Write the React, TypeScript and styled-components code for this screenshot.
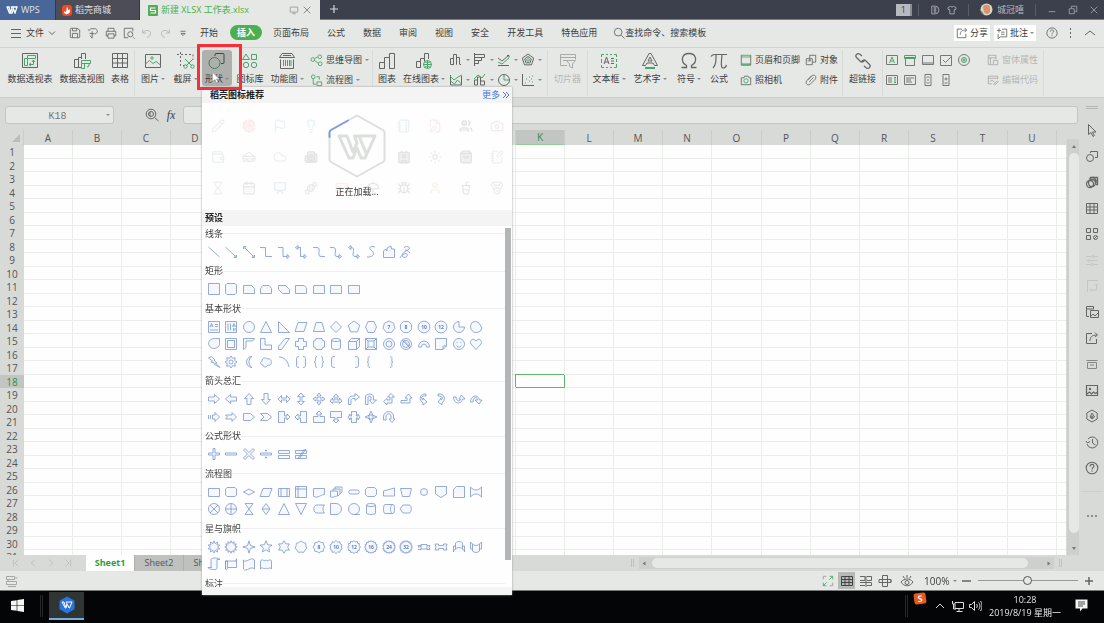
import React from "react";
import styled, { createGlobalStyle } from "styled-components";
import {
  Bug, Building2, CalendarDays, Camera, Candy, ChartPie, Cloud, Contact, CupSoda, FilePen, Flag, Hourglass,
  Lightbulb, Mail, Medal, Notebook, NotebookPen, Pencil, Presentation, Sandwich, ShoppingBag, Sun, Umbrella,
  User, Users, Wallet,
} from "lucide-react";

const font = '"Open Sans", "Noto Sans CJK SC", sans-serif';
const ink = "#646664";
const green = "#4aa56c";
const surface = "#e6e8e5";
const chrome = "#d8dad8";
const line = "#cbcdcb";

const Global = createGlobalStyle`
  * { box-sizing: border-box; }
  body { margin: 0; overflow: hidden; font: 9px/12px ${font}; color: #3c3e3c; }
  button, input, select { font: inherit; color: inherit; border: 0; padding: 0; margin: 0; background: none; }
  svg { display: block; flex: none; }
`;

/* ---------- drawing helpers ---------- */

const circle = (x: number, y: number, r: number) => `M${x - r} ${y}a${r} ${r} 0 1 0 ${2 * r} 0a${r} ${r} 0 1 0 ${-2 * r} 0z`;

const star = (points: number, outer: number, inner: number, cx = 7, cy = 7) => {
  const steps: string[] = [];
  for (let i = 0; i < points * 2; i++) {
    const r = i % 2 ? inner : outer;
    const a = (Math.PI * i) / points - Math.PI / 2;
    steps.push(`${(cx + r * Math.cos(a)).toFixed(2)} ${(cy + r * Math.sin(a)).toFixed(2)}`);
  }
  return `M${steps.join("L")}z`;
};

const polygon = (sides: number, r: number, turn = 0) => {
  const steps: string[] = [];
  for (let i = 0; i < sides; i++) {
    const a = (2 * Math.PI * i) / sides - Math.PI / 2 + turn;
    steps.push(`${(7 + r * Math.cos(a)).toFixed(2)} ${(7 + r * Math.sin(a)).toFixed(2)}`);
  }
  return `M${steps.join("L")}z`;
};

type IconProps = { box?: number; size?: number; k?: string; g?: string; fill?: string; color?: string; accent?: string; dash?: string; weight?: number };
const Icon = ({ box = 18, size = box, k, g, fill, color = ink, accent = green, dash, weight = 1 }: IconProps) => (
  <svg width={size} height={size} viewBox={`0 0 ${box} ${box}`} fill="none" strokeWidth={weight} aria-hidden="true">
    {k && <path d={k} stroke={color} strokeDasharray={dash} />}
    {g && <path d={g} stroke={accent} />}
    {fill && <path d={fill} fill={color} />}
  </svg>
);

/* ---------- title bar ---------- */

const Window = styled.div`
  display: flex;
  flex-direction: column;
  height: 100vh;
  background: ${surface};
`;

const TitleBar = styled.header`
  display: flex;
  height: 20px;
  flex: none;
  background: #3c3f4c;
  border-bottom: 1px solid #7577a6;
  color: #b5b7c0;
`;

const WindowTab = styled.button<{ $width: number; $tone: string }>`
  display: flex;
  align-items: center;
  gap: 3px;
  width: ${(p) => p.$width}px;
  height: 20px;
  padding-left: 6px;
  background: ${(p) => p.$tone};
  border-right: 1px solid #34374a;
  color: #e3e4e8;
  white-space: nowrap;
`;

const FileTab = styled(WindowTab)`
  padding: 0 8px;
  color: #4cb050;
  border: 0;
`;

const Push = styled.span`
  flex: 1;
`;

const TitleTools = styled.div`
  display: flex;
  align-items: center;
  margin-left: auto;
  padding-right: 5px;
  gap: 11px;
`;

const Counter = styled.span`
  width: 16px;
  height: 12px;
  margin-right: -5px;
  border-right: 2px solid #8c8e96;
  background: #b9bac0;
  color: #3c3f4c;
  text-align: center;
`;

const IconButton = styled.button<{ $width?: number }>`
  display: flex;
  align-items: center;
  justify-content: center;
  width: ${(p) => p.$width ?? 18}px;
  height: 18px;
  flex: none;
`;

const ToolButton = styled.button`
  display: flex;
  align-items: center;
`;

const Divider = styled.span<{ $tone?: string; $height?: number }>`
  width: 1px;
  height: ${(p) => p.$height ?? 12}px;
  flex: none;
  background: ${(p) => p.$tone ?? line};
`;

/* ---------- menu bar ---------- */

const MenuBar = styled.nav`
  display: flex;
  align-items: center;
  height: 28px;
  flex: none;
  padding: 0 2px 2px 10px;
  border-bottom: 1px solid #d3d5d3;
  white-space: nowrap;
`;

const FileMenu = styled.button`
  display: flex;
  align-items: center;
  gap: 4px;
  width: 50px;
`;

const QuickTools = styled.div`
  display: flex;
  margin: 0 8px 0 6px;
`;

const MenuTabs = styled.div`
  display: flex;
  align-items: center;
  gap: 18px;
`;

const MenuTab = styled.button<{ $active?: boolean }>`
  height: 15px;
  border-radius: 8px;
  ${(p) => p.$active && "padding: 0 7px; margin: 0 -7px 0 -6px; background: #4caf50; color: #fff; font-weight: 700;"}
`;

const Search = styled.button`
  display: flex;
  align-items: center;
  margin-left: 16px;
`;

const WhiteButton = styled.button`
  display: flex;
  align-items: center;
  gap: 2px;
  height: 16px;
  padding: 0 2px;
  margin-right: 4px;
  background: #fdfefd;
`;

/* ---------- ribbon ---------- */

const Ribbon = styled.section`
  display: flex;
  height: 50px;
  flex: none;
  padding: 2px 0 0 4px;
  border-bottom: 1px solid ${line};
  white-space: nowrap;
`;

const RibbonDivider = styled.span`
  width: 1px;
  margin: 0 2px 1px;
  flex: none;
  background: #d9dbd9;
`;

const BigButton = styled.button<{ $width: number; $active?: boolean; $muted?: boolean }>`
  display: flex;
  flex-direction: column;
  align-items: center;
  gap: 3px;
  width: ${(p) => p.$width}px;
  height: 36px;
  padding-top: 2px;
  flex: none;
  border-radius: 3px;
  background: ${(p) => (p.$active ? "#aeb0ae" : "none")};
  color: ${(p) => (p.$muted ? "#b5b7b5" : "inherit")};
`;

const Label = styled.span`
  display: flex;
  align-items: center;
  gap: 2px;
`;

const Caret = styled.i`
  border: 2px solid transparent;
  border-top-color: #8a8c8a;
  border-bottom: 0;
  flex: none;
`;

const Stack = styled.div<{ $width: number; $indent: number }>`
  display: flex;
  flex-direction: column;
  width: ${(p) => p.$width}px;
  padding-left: ${(p) => p.$indent}px;
  flex: none;
`;

const SmallButton = styled.button<{ $muted?: boolean }>`
  display: flex;
  align-items: center;
  gap: 3px;
  height: 20px;
  color: ${(p) => (p.$muted ? "#b5b7b5" : "inherit")};
`;

const IconGrid = styled.div<{ $columns: number; $cell: number }>`
  display: grid;
  grid-template-columns: repeat(${(p) => p.$columns}, ${(p) => p.$cell}px);
  grid-auto-rows: 20px;
  flex: none;
`;

const MenuAnchor = styled.div`
  position: relative;
  z-index: 5;
  align-self: flex-start;
`;

const Highlight = styled.span`
  position: absolute;
  z-index: 2;
  inset: -6px -10px -4px -5px;
  border: 3px solid #f5303a;
  pointer-events: none;
`;

const Pointer = styled.span`
  position: absolute;
  z-index: 3;
  left: 10px;
  top: 22px;
`;

/* ---------- shape menu ---------- */

const Menu = styled.div`
  position: absolute;
  left: 0;
  top: 37px;
  width: 310px;
  background: #fdfefd;
  box-shadow: 0 0 2px #9a9c9a;
`;

const MenuHeader = styled.div<{ $indent: number }>`
  display: flex;
  align-items: center;
  justify-content: space-between;
  height: 16px;
  padding: 0 2px 0 ${(p) => p.$indent}px;
  background: #f3f4f3;
  color: #222;
  font-weight: 700;
`;

const More = styled.a`
  display: flex;
  align-items: center;
  gap: 2px;
  color: #4a78e0;
  font-weight: 400;
  text-decoration: none;
`;

const Suggestions = styled.div`
  position: relative;
  display: grid;
  grid-template-columns: repeat(10, 31px);
  grid-auto-rows: 31px;
  height: 107px;
  padding-top: 7px;
  place-items: center;
`;

const Faded = styled.span<{ $tone: string }>`
  color: ${(p) => p.$tone};
  opacity: 0.11;
`;

const Loader = styled.div`
  position: absolute;
  inset: 11px 0 0;
  display: flex;
  flex-direction: column;
  align-items: center;
  gap: 8px;
`;

const ShapeScroll = styled.div`
  display: flex;
  height: 361px;
`;

const ShapeList = styled.div`
  flex: 1;
  overflow: auto;
  scrollbar-width: none;
`;

const ScrollThumb = styled.span`
  width: 6px;
  height: 332px;
  margin: 2px 1px 0 0;
  background: #b3b5b9;
`;

const GroupTitle = styled.h3`
  display: flex;
  align-items: center;
  height: 15px;
  margin: 0 0 2px;
  padding-left: 3px;
  font-size: 9px;
  font-weight: 400;
  &::after { content: ""; flex: 1; height: 1px; background: #f0f0f0; }
`;

const ShapeGrid = styled.div`
  display: grid;
  grid-template-columns: repeat(16, 1fr);
  width: 280px;
  margin: 0 0 3px 3px;
`;

const ShapeCell = styled.button`
  display: grid;
  place-items: center;
  aspect-ratio: 1;
`;

const MenuFooter = styled.div`
  height: 8px;
  background: #f6f5f5;
`;

type Shape = string | { d: string; t: string };

const rightArrow = "M1.5 5h6V2.5L12.5 7l-5 4.5V9h-6z";
const heads = { end: "M10 9.5l2.5 2-2.5 2z", start: "M4 .5L1.5 2.5l2.5 2z" };
const flatBox = "M1.5 3.5h11v8h-11z";
const square = "M1.5 1.5h11v11h-11z";

const groups: { name: string; shapes: Shape[] }[] = [
  {
    name: "线条",
    shapes: [
      "M1.5 2l11 10", "M1.5 2l10 9.5M12.5 12.5h-2.500l2.500-2.500z", "M3 3l8.500 8.500M12.5 12.5h-2.500l2.500-2.500zM1.500 1.500h2.500l-2.500 2.500z",
      "M1 2.5h5.500v9H13", "M1 2.500h5v9h4" + heads.end, "M4 2.500h2.500v9H10" + heads.end + heads.start,
      "M1 2.500h4c5 0-1 9 4 9h4", "M1 2.500h3c6 0-1 9 4 9h2" + heads.end, "M4 2.500c6 0-1 9 4 9h2" + heads.end + heads.start,
      "M11 2C6 0 4 3.500 7.500 5.500S10 12.500 3 12", "M1.500 12.500V6l2-2 1.500 2V3l4-2 .5 3h3v8.500z",
      "M5 3c2-3 7-1 5 1S4 7 3 10c0 3 4 3 5 1s-1-3-3-2-3 2-4 4M6 5c2 0 3 1 5 3",
    ],
  },
  {
    name: "矩形",
    shapes: [
      square, "M3 1.500h8l1.500 1.500v8L11 12.500H3L1.500 11V3z", "M1.500 3.500h8l3 3v5h-11z", "M4 3.500h6l2.500 3v5h-11v-5z", "M1.500 3.500h7l4 4v4h-7l-4-4z",
      "M1.500 3.500H9c2 0 3.500 1.500 3.500 3.500v4.500h-11z", "M2 3.500h10.500v8h-11V4z", "M1.500 3.500H12l.5.5v7.500h-11z", flatBox,
    ],
  },
  {
    name: "基本形状",
    shapes: [
      square + "M3 7l1.500-3.500L6 7M3.500 6h2M8 4.500h3M8 6.500h3M3 10h8", square + "M4 3.500v7M6.500 3.500v7M8.500 7L10 3.500 11.500 7M9 6h2M9.500 8v3M11 8v3",
      circle(7, 7, 5.5), "M7 1.500l5.500 11h-11z", "M1.500 1.500l11 11h-11z", "M4 2.500h9l-3 9H1z", "M4 2.500h6l2.500 9h-11z", "M7 1.500L12.500 7 7 12.500 1.500 7z",
      polygon(5, 6), "M4 1.500h6L12.500 7 10 12.500H4L1.500 7z", { d: polygon(7, 6), t: "7" }, { d: polygon(8, 6, 0.39), t: "8" }, { d: polygon(10, 6), t: "10" },
      { d: polygon(12, 6), t: "12" }, "M7 1.500a5.500 5.500 0 1 0 5.500 5.500H7z", "M3 2.500a5.500 5.500 0 0 1 7 .5l3 5a5.500 5.500 0 0 1-5 4.500A6 6 0 0 1 3 2.500z",
      "M12.500 1.500v6a5.500 5 0 1 1-5-6z", square + "M3.500 3.500h7v7h-7z", "M1.500 12.500v-11h11L10.500 4H4v6.500z", "M1.500 1.500H6V8h6.500v4.500h-11z", "M8 1.500h4.500l-8 11h-3v-3z",
      "M4.500 1.500h5v3h3v5h-3v3h-5v-3h-3v-5h3z", "M4 1.500h6l.5 2 2 .5v6l-2 .5-.5 2H4l-.5-2-2-.5V4l2-.5z",
      "M2.500 3v8c0 2 9 2 9 0V3c0-2-9-2-9 0zM2.500 3c0 2 9 2 9 0", "M1.500 4.500h8v8h-8zM1.500 4.500l3-3h8v8l-3 3M9.500 4.500l3-3", square + "M4 4h6v6H4zM1.500 1.500L4 4M12.500 1.500L10 4M1.500 12.500L4 10M12.500 12.500L10 10",
      circle(7, 7, 5.5) + circle(7, 7, 3), circle(7, 7, 5.5) + circle(7, 7, 3.5) + "M3 3l8 8M4.500 3l7 7", "M1.500 10a5.500 6 0 0 1 11 0H9.500a2.500 3 0 0 0-5 0z",
      "M1.500 1.500h11V9L9 12.500H1.500zM9 12.500V9h3.500", circle(7, 7, 5.5) + "M4.500 8.500c1 2 4 2 5 0M5 5v1M9 5v1", "M7 12.500L2 7C0 4 4 0 7 4c3-4 7 0 5 3z",
      "M1.500 3l3-1.500L8 5l-1 .5L10 8l-1 .5 4 4-5.500-3 1-1L4 7l1.500-1z", star(8, 6, 4) + circle(7, 7, 2), "M10 1.500a5.500 5.500 0 1 0 0 11c-4-2-4-9 0-11z",
      "M4 10c-3 0-3-3-1-4 0-3 4-4 5-2 3-1 5 2 4 3 1 2-1 4-3 3-2 3-5 2-5 0z", "M2 2c5 0 9 4 10 10", "M5 1.500c-2 0-2.500 1-2.500 2v7c0 1 .5 2 2.500 2M9 1.500c2 0 2.500 1 2.500 2v7c0 1-.5 2-2.500 2",
      "M5 1.500C2 1.500 5 7 2 7c3 0 0 5.500 3 5.500M9 1.500c3 0 0 5.500 3 5.500-3 0 0 5.500-3 5.500", "M6 1.500c-3 0-3.500 1-3.500 2v7c0 1 .5 2 3.500 2", "M8 1.500c3 0 3.500 1 3.500 2v7c0 1-.5 2-3.500 2",
      "M6 1.500C2 1.500 6 7 3 7c3 0-1 5.500 3 5.500", "M8 1.500c4 0 0 5.500 3 5.500-3 0 1 5.500-3 5.500",
    ],
  },
  {
    name: "箭头总汇",
    shapes: [
      rightArrow, "M12.500 5h-6V2.500L1.500 7l5 4.500V9h6z", "M5 12.500v-6H2.500L7 1.500l4.500 5H9v6z", "M5 1.500v6H2.500L7 12.500l4.500-5H9v-6z",
      "M1 7l3.500-3.500V6h5V3.500L13 7l-3.500 3.500V8h-5v2.500z", "M7 1l3.500 3.500H8v5h2.500L7 13 3.500 9.500H6v-5H3.500z",
      "M7 1l2 2.500H8V6h2.500V5L13 7l-2.500 2V8H8v2.500h1L7 13l-2-2.500h1V8H3.500v1L1 7l2.500-2v1H6V3.500H5z", "M7 2l2.500 3H8v3h2.500V6L13 9l-2.500 2.500V10h-7v1.500L1 9l2.500-3v2H6V5H4.500z",
      "M1.500 12.500V8c0-3 2-4 4-4H8V1.500L12.500 5 8 8.500V6.500H6c-1 0-2 1-2 2v4z", "M1.500 12.500V5c0-4 8-4 8 0v3h3L8.500 12l-3-4H7V5c0-1-3-1-3 0v7.500z",
      "M9 1.500L12.500 5H10v6H5v2L1.500 9.500 5 6.500V8h3V5H5.500z", "M9.500 2L13 6h-2v5H2V8.500h6V6H6z", "M9 2C3 1 1 8 6 11v2l4-3-4-4v2C3 6 5 3 9 4z", "M4 2c7-1 8 6 4 9v2L4 10l3-4v2c3-2 1-4-3-4z",
      "M1.500 5c0 7 8 8 9 2H13L9.500 3 7 7h1.500C8 10 4 9 4 5z", "M1.500 10c0-7 8-8 9-2H13l-3 4-4-4h2.500C8 4 4 5 4 10z",
      "M1.500 5v4M3.500 5v4M5.500 5H8V2.500L12.500 7 8 11.500V9H5.500z", "M1.500 5H8V2.500L12.500 7 8 11.500V9H1.500l2-2z", "M1.500 3.500h7L12.500 7l-4 3.500h-7z", "M1.500 3.500h7L12.500 7l-4 3.500h-7L5 7z",
      "M1.500 1.500h6V6H10V4l3 3-3 3V8H7.500v4.500h-6z", "M12.500 1.500h-6V6H4V4L1 7l3 3V8h2.500v4.500h6z", "M1.500 12.500v-6H6V4H4l3-3 3 3H8v2.500h4.500v6z", "M1.500 1.500v6H6V10H4l3 3 3-3H8V7.500h4.500v-6z",
      "M4.500 1.500h5V6H11V4l2 3-2 3V8H9.500v4.500h-5V8H3v2L1 7l2-3v2h1.500z", star(4, 6, 2.5) + "M5 5h4v4H5z", "M1.500 10V7c0-7 10-7 10-1v3H13l-3 3.500L7 9h2V6c0-3-5-3-5 1v3z",
    ],
  },
  {
    name: "公式形状",
    shapes: [
      "M6 1.500h2V6h4.500v2H8v4.500H6V8H1.500V6H6z", "M1.500 6h11v2h-11z", "M3 1.500l4 4 4-4L12.500 3l-4 4 4 4-1.500 1.500-4-4-4 4L1.500 11l4-4-4-4z",
      "M1.500 6h11v2h-11zM6.500 3h1v1h-1zM6.500 10h1v1h-1z", "M1.500 3.500h11v3h-11zM1.500 8.500h11v3h-11z", "M1.500 3.500h11v3h-11zM1.500 8.500h11v3h-11zM10.500 2l-7 10M12 2l-7 10",
    ],
  },
  {
    name: "流程图",
    shapes: [
      flatBox, "M3 2.500h8l1.500 1.500v6L11 11.500H3L1.500 10V4z", "M7 4l5.500 3L7 10 1.500 7z", "M4 3.500h9l-3 8H1z", flatBox + "M4 3.500v8M10 3.500v8", square + "M4 1.500v11M1.500 4h11",
      "M1.500 3.500h11v6c-4 0-6 4-11 2z", "M1.500 6h7v5c-3 0-4 2-7 1zM4 6V4h7v5M6 4V2h7v5l-4 4", "M4 5h6c3 0 3 4 0 4H4C1 9 1 5 4 5z", "M3.500 2.500h7l2 2v5l-2 2h-7l-2-2v-5z",
      "M1.500 6l11-3v8h-11z", "M1.500 3.500h11l-2 8h-7z", circle(7, 7, 3.5), "M1.500 1.500h11V9L7 12.500 1.500 9z", "M4.500 1.500h8v11h-11v-8z", "M1.500 2c3.500 4 7.500 4 11 0v10c-3.500-4-7.500-4-11 0z",
      circle(7, 7, 5.5) + "M3 3l8 8M11 3l-8 8", circle(7, 7, 5.5) + "M1.500 7h11M7 1.500v11", "M3 1.500h8l-8 11h8z", "M7 1.500l4 5.500-4 5.500L3 7zM3 7h8", "M7 1.500l5.500 11h-11z", "M1.500 1.500h11L7 12.500z",
      "M4 3h8.500c-2 2-2 6 0 8H4c-3-2-3-6 0-8z", "M1.500 1.500H7a5.500 5.500 0 0 1 0 11H1.500z", circle(7, 7, 5.5) + "M8 12.500h5", "M2.500 3v8c0 2 9 2 9 0V3c0-2-9-2-9 0zM2.500 3c0 2 9 2 9 0",
      "M3 2.500h8c2 0 2 9 0 9H3c-2 0-2-9 0-9zM10 2.500c-2 2-2 7 0 9", "M4 3h6c3 0 3 8 0 8H4L1 7z",
    ],
  },
  {
    name: "星与旗帜",
    shapes: [
      star(10, 6.2, 3.6), star(12, 6.2, 4), star(4, 6.2, 2), star(5, 6.2, 2.8), star(6, 6.2, 3.6), star(7, 6, 5), { d: star(8, 6, 5), t: "8" }, { d: star(10, 6.5, 5.2), t: "10" },
      { d: star(12, 6.5, 5.2), t: "12" }, { d: star(16, 6.5, 5.2), t: "16" }, { d: star(18, 6.5, 5.2), t: "24" }, { d: star(20, 6.5, 5.2), t: "32" },
      "M1 9.500h3V4.500h6v5h3l-1-2 1-2h-3M4 5.500H1l1 2zM4 9h6", "M1 4h3.500v1.500h5V4H13l-1 3 1 3H9.500V8.500h-5V10H1l1-3z", "M1.500 12c0-3 2-2 2-3V3c2-2 5-2 7 0v6c0 1 2 0 2 3M3.500 9c2-2 5-2 7 0M1.500 12V6h2M12.500 12V6h-2",
      "M1.500 2v7h2v2c2 2 5 2 7 0V9h2V2l-2 2v5M3.500 9V4l-2-2M3.500 4c2 2 5 2 7 0", "M4 10V2.500c0-2 8-2 9 0h-3v9c-1 2-9 1-9-1h4", "M1.500 12.500V4H12V2.500M3.500 10.500h9v-9M1.500 4h2v7c0 2-2 2-2 0z",
      "M1.500 3c3 4 7-4 11 0v9c-4-4-8 4-11 0z", "M1.500 4c2-3 3 1 5.500-1 2 2 4-2 5.500 1v8c-2-3-3 1-5.500-1-2 2-4-2-5.500 1z",
    ],
  },
  { name: "标注", shapes: [] },
];

const ShapeIcon = ({ shape }: { shape: Shape }) => {
  const { d, t } = typeof shape === "string" ? { d: shape, t: "" } : shape;
  return (
    <svg width="14" height="14" viewBox="0 0 14 14" aria-hidden="true">
      <path d={d} fill="#eaf1fc" fillOpacity="0.4" stroke="#7a98d0" strokeWidth="0.8" />
      {t && <text x="7" y="9" fontSize="5" fontWeight="700" fill="#5b7fc4" textAnchor="middle">{t}</text>}
    </svg>
  );
};

const suggestions: ([React.ElementType, string] | null)[] = [
  [Pencil, "#777"], [ChartPie, "#e33"], [Flag, "#39c"], [Lightbulb, "#48b"], null, null, [Notebook, "#58a"], [FilePen, "#c66"], [Users, "#000"], [Camera, "#955"],
  [Wallet, "#488"], [Sandwich, "#555"], [Cloud, "#777"], [Building2, "#000"], null, null, [Contact, "#000"], [Sun, "#555"], [ShoppingBag, "#000"], [NotebookPen, "#b66"],
  [Hourglass, "#777"], [CalendarDays, "#222"], [Presentation, "#36c"], [Candy, "#444"], [Mail, "#e66"], [Umbrella, "#222"], [Bug, "#222"], [User, "#c82"], [CupSoda, "#333"], [Medal, "#666"],
];

const ShapeMenu = () => (
  <Menu>
    <MenuHeader $indent={8}>
      稻壳图标推荐
      <More href="#more">
        更多 <Icon box={8} k="M1 1l3 3-3 3M4 1l3 3-3 3" color="#4a78e0" />
      </More>
    </MenuHeader>
    <Suggestions>
      {suggestions.map((s, i) => {
        if (!s) return <span key={i} />;
        const [Picture, tone] = s;
        return <Faded key={i} $tone={tone}><Picture size={14} fill={tone === "#000" || tone === "#e33" ? "currentColor" : "none"} fillOpacity={0.5} /></Faded>;
      })}
      <Loader>
        <svg width="58" height="64" viewBox="0 0 58 64" fill="none" strokeWidth="2" strokeLinejoin="round" strokeLinecap="round">
          <path d="M29 1.500 55 16q1.500 1 1.500 2.500v27q0 1.500-1.500 2.500L29 62.500 3 48q-1.500-1-1.500-2.500v-27Q1.500 17 3 16z" stroke="#dddfdd" fill="#fdfefd" />
          <path d="M1.500 23v-4.500Q1.500 17 3 16L20 6.500" stroke="#7f9fe0" />
          <path d="M11 22h8l6 16 4-9-2.500-7H47L37 44h-4l-4-10-4 10h-4zM31 22l7 17" stroke="#dddfdd" strokeWidth="3" />
        </svg>
        正在加载...
      </Loader>
    </Suggestions>
    <MenuHeader $indent={3}>预设</MenuHeader>
    <ShapeScroll>
      <ShapeList>
        {groups.map((group) => (
          <section key={group.name}>
            <GroupTitle>{group.name}</GroupTitle>
            <ShapeGrid>
              {group.shapes.map((shape, i) => (
                <ShapeCell key={i} aria-label={`${group.name} ${i + 1}`}><ShapeIcon shape={shape} /></ShapeCell>
              ))}
            </ShapeGrid>
          </section>
        ))}
      </ShapeList>
      <ScrollThumb />
    </ShapeScroll>
    <MenuFooter />
  </Menu>
);

/* ---------- ribbon content ---------- */

const barsIcon = "M1.500 16.500v-6h5v6zM6.500 16.500v-11h5v11M11.500 16.500v-15h5v15h-5";

type BigSpec = { label: string; width: number; icon: IconProps; caret?: boolean; muted?: boolean };
const Big = ({ label, width, icon, caret, muted }: BigSpec) => (
  <BigButton $width={width} $muted={muted}>
    <Icon {...icon} />
    <Label>{label}{caret && <Caret />}</Label>
  </BigButton>
);

const insertTools: BigSpec[] = [
  { label: "图片", width: 32, caret: true, icon: { k: "M1.500 2.500h15v13h-15z", g: "M1.500 12l4-3.500 3.500 3 3-2 4.500 3.500" + circle(8, 6, 1.2) } },
  { label: "截屏", width: 33, caret: true, icon: { k: "M3.500 0v13.500h4M0 2.500h16v5", dash: "2 2", g: "M8 7l7 7M16 7l-7 7" + circle(8.5, 14.5, 1.7) + circle(15.5, 14.5, 1.7) } },
];

const textTools: BigSpec[] = [
  { label: "文本框", width: 38, caret: true, icon: { g: "M1.500 5V2.500H4M6 2.500h2M10 2.500h2M14 2.500h2.500V5M16.500 7v3M16.500 12v3.500H14M12 15.500h-2M8 15.500H6M4 15.500H1.500V13M1.500 11V7", k: "M4 12l2.500-7L9 12M5 10h3M11 6.500h3M11 9h3M11 11.500h3" } },
  { label: "艺术字", width: 44, caret: true, icon: { k: "M1.500 13.500L8 1.500h2l6.500 12h-3L12 11H6l-1.500 2.500zM7 9l2-4 2 4z", g: "M4 15.500h10M4 16.500h10" } },
  { label: "符号", width: 34, caret: true, icon: { k: "M1.500 15.500h5v-2C0 10 1.500 1.500 9 1.500s9 8.500 2.500 12v2h5", weight: 1.3 } },
  { label: "公式", width: 26, icon: { k: "M1 4.500c1-2 2-2 4-2h12M6 3c0 6 0 10-3 13M12 3c-1 9-1 13 1 13s3-1 3.500-3", weight: 1.2 } },
];

const miniCharts: IconProps[] = [
  { k: "M1.500 11.500v-6h3v6zM4.500 11.500v-10h3v10M7.500 11.500v-7h3v7M11 11.500h1" }, { k: "M1.500 0v13M1.500 1.500h10v3h-10M1.500 4.500h7v3h-7M1.500 7.500h4v3h-4" },
  { k: "M1 5l4 3 6-5M10 2.500h2v2M1 12.500h11", g: "M1 9l4 2 7-6" }, { k: polygon(5, 6) + polygon(5, 3.5), g: polygon(5, 1.5) },
  { k: "M1.500 2v10h11V3", g: "M1 3l4 4 4-3 4-2M1.500 8l4 3 3-4 4 4" }, { k: "M1.500 12V7h3v5zM4.500 12V4h3v8M7.500 12V8h4v4z", g: "M1 6l4-4 4 3 3-4" },
  { k: circle(7, 7, 5.5), g: "M7 1.500V7h5.500" }, { k: "M1.500 1v11.500H13", g: "M4 10h1M5 6h1M8 8h1M8 4h1M11 9h1M11 3h1M10 6h1" },
];

const formControls: IconProps[] = [
  { k: "M1.500 2.500h11v9h-11z", g: "M4.500 10L7 4l2.500 6M5.500 8h3" }, { k: "M2.500 4.500h9v8h-9z", g: "M1.500 2.500h11v3h-11z" }, { k: "M1.500 2.500h11v9h-11zM1.500 10h11" },
  { k: "M1.500 2.500h11v10h-11zM4 7l2.500 2.500L12 4" }, { k: circle(7, 7, 5.5), g: circle(7, 7, 2.5) + circle(7, 7, 1) },
  { k: "M1.500 2.500h11v9h-11zM3 5h4M3 7h4M3 9h4", g: "M10 4v6M9 5l1-1 1 1M9 9l1 1 1-1" }, { k: "M1.500 2.500h11v9h-11zM3 5h8M3 7h5M3 9h6" },
  { k: "M4 1.500h6v11H4zM5.500 5L7 3.500 8.500 5M5.500 9L7 10.500 8.500 9M6 7h2" }, { k: "M4 1.500h6v11H4zM5.500 6h3M7 4.500v3M5.500 10h3" },
];

const RibbonContent = () => (
  <Ribbon>
    <Big label="数据透视表" width={52} icon={{ k: "M1.500 1.500h15v14h-15z", g: "M6.500 3.500h8v3h-8zM3.500 6.500h3v7h-3zM12.500 8.500v4h-4M11 10l1.500-2 1.500 2M10 11l-2 1.500 2 1.500" }} />
    <Big label="数据透视图" width={52} icon={{ k: "M1.500 15.500v-8h4v8zM5.500 15.500v-10h3M8.500 7V1.500h4V7M1.500 15.500H8", g: "M8.500 8.500h9v3h-9zM8.500 11.500h3v5h-3zM14 15l2-1v-2" }} />
    <Big label="表格" width={24} icon={{ k: "M1.500 1.500h15v14h-15zM1.500 6.500h15M1.500 11h15M6.500 1.500v14M11.500 1.500v14" }} />
    <RibbonDivider />
    {insertTools.map((t) => <Big key={t.label} {...t} />)}
    <MenuAnchor>
      <BigButton $width={30} $active>
        <Icon k="M7 4V2.500q0-1 1-1h7q1 0 1 1v8q0 1-1 1h-2" g={circle(6.5, 11, 5.5)} accent="#358a50" color="#444" />
        <Label>形状<Caret /></Label>
      </BigButton>
      <ShapeMenu />
      <Highlight />
      <Pointer>
        <svg width="8" height="12" viewBox="0 0 8 12"><path d="M.5.500v9L3 7.500l1.500 3.500 1.500-.7L4.500 7h3z" fill="#fff" stroke="#999" strokeWidth=".5" /></svg>
      </Pointer>
    </MenuAnchor>
    <Big label="图标库" width={36} icon={{ g: "M5 2l3.500 5.500h-7zM10.500 2.500h5v5h-5z" + circle(5, 13, 2.7) + circle(13, 13, 2.7) }} />
    <Big label="功能图" width={38} caret icon={{ k: "M1.500 5.500L4 1.500h10l2.500 4zM2.500 7.500v9h13v-9M5 3.500h8", g: "M5.500 8v6M7.500 8v6M9.500 8v6M11.500 8v6M13 8v6" }} />
    <Stack $width={64} $indent={4}>
      <SmallButton><Icon box={14} size={13} g={circle(3, 6, 2) + "M5 5l3-2M5 7l4 3" + circle(10.5, 3, 2) + circle(11, 10.5, 2)} />思维导图<Caret /></SmallButton>
      <SmallButton><Icon box={14} size={13} g={circle(3.5, 3, 2) + "M7 3h3v3M3.500 5v6h3M7.500 8.500h5v4h-5z"} />流程图<Caret /></SmallButton>
    </Stack>
    <RibbonDivider />
    <Big label="图表" width={24} icon={{ k: barsIcon }} />
    <Big label="在线图表" width={50} caret icon={{ k: "M1.500 15.500v-6h4v6zM5.500 15.500v-9h4v3M9.500 7V1.500h4V7", g: circle(12.5, 12.5, 4) + "M8.500 12.500h8M12.500 8.500v8M10 10c2 1 3 1 5 0M10 15c2-1 3-1 5 0" }} />
    <IconGrid $columns={4} $cell={24}>
      {miniCharts.map((icon, i) => <SmallButton key={i} aria-label={`图表类型 ${i + 1}`}><Icon box={14} {...icon} /><Caret /></SmallButton>)}
    </IconGrid>
    <RibbonDivider />
    <Big label="切片器" width={35} muted icon={{ k: "M8 13.500H1.500v-11h15v5M1.500 5.500h15M4 8.500h4M7.500 8.500h9l-3 3.500v4l-3-1.500V12z", color: "#a9aba9" }} />
    <RibbonDivider />
    {textTools.map((t) => <Big key={t.label} {...t} />)}
    <Stack $width={73} $indent={8}>
      <SmallButton><Icon box={14} size={12} k="M1.500 1v12h11V1" g="M2 1.500h10v2H2zM2 11.500h10v1H2z" />页眉和页脚</SmallButton>
      <SmallButton><Icon box={14} size={12} k="M1.500 4.500h3l1-2h4l1 2h2v8h-11z" g={circle(7, 8, 2.5)} />照相机</SmallButton>
    </Stack>
    <Stack $width={35} $indent={0}>
      <SmallButton><Icon box={14} size={12} k="M5.500 8V1.500h7v8H9M1.500 5.500h7v7h-7zM3 8h4" />对象</SmallButton>
      <SmallButton><Icon box={14} size={12} k="M3 7l5-5c3-2 6 1 4 4l-6 6c-3 2-6-1-4-4l6-6M5 9l5-5" />附件</SmallButton>
    </Stack>
    <RibbonDivider />
    <Big label="超链接" width={35} icon={{ k: "M8 4L5.500 2c-2-1.500-5 1.500-3 3.500l4 4c1.500 1.500 4 0 4-2M10 14l2.500 2c2 1.500 5-1.500 3-3.500l-4-4c-1.500-1.500-4 0-4 2", weight: 1.2 }} />
    <RibbonDivider />
    <IconGrid $columns={5} $cell={18}>
      {formControls.map((icon, i) => <SmallButton key={i} aria-label={`表单控件 ${i + 1}`}><Icon box={14} {...icon} color="#777977" /></SmallButton>)}
    </IconGrid>
    <Stack $width={66} $indent={12}>
      <SmallButton $muted><Icon box={14} size={12} k="M7 12.500H1.500v-11h9V6M1.500 4.500h9M4 4.500v8M7.500 7.500h5v5h-5z" color="#aaa" />窗体属性</SmallButton>
      <SmallButton $muted><Icon box={14} size={12} k="M6 11.500H1.500v-9h11V6M1.500 5h11M3 9l3-2 3 3M8 12l4-4 1 1-4 4z" color="#aaa" />编辑代码</SmallButton>
    </Stack>
    <RibbonDivider />
  </Ribbon>
);

/* ---------- worksheet ---------- */

const Workspace = styled.main`
  display: flex;
  flex: 1;
  min-height: 0;
  background: ${chrome};
`;

const SheetColumn = styled.div`
  display: flex;
  flex-direction: column;
  flex: 1;
  min-width: 0;
`;

const FormulaBar = styled.div`
  display: flex;
  align-items: center;
  height: 32px;
  flex: none;
  padding: 2px 2px 0 5px;
`;

const Field = styled.label`
  display: flex;
  align-items: center;
  height: 18px;
  padding: 0 3px;
  border: 1px solid #c3c5c3;
  border-radius: 3px;
  background: ${surface};
`;

const NameBox = styled(Field)`
  width: 109px;
  margin-right: 30px;
  input { width: 100%; min-width: 0; padding-top: 4px; text-align: center; font: 10px/12px "Liberation Mono", monospace; color: #777; }
`;

const FormulaInput = styled(Field)`
  flex: 1;
  input { width: 100%; }
`;

const Fx = styled.button`
  width: 22px;
  margin-right: 1px;
  font: italic 12px/14px "Liberation Serif", serif;
`;

const SheetArea = styled.div`
  display: flex;
  flex: 1;
  min-height: 0;
`;

const Viewport = styled.div`
  flex: 1;
  min-width: 0;
  overflow: auto;
  scrollbar-width: none;
  background: #fdfefd;
`;

const Grid = styled.table`
  width: 1px;
  table-layout: fixed;
  border-collapse: separate;
  border-spacing: 0;
  font-size: 10px;
  line-height: 12px;
  col { width: 49px; }
  col:first-child { width: 24px; }
  col:nth-child(5n + 6) { width: 50px; }
  thead tr { height: 15px; }
  tbody tr { height: 13px; }
  tbody tr:nth-child(odd) { height: 14px; }
`;

const Head = styled.th<{ $selected?: boolean }>`
  padding: 0;
  overflow: hidden;
  background: ${(p) => (p.$selected ? "#c3c5c3" : chrome)};
  color: ${(p) => (p.$selected ? "#2f8f46" : "#555")};
  font-weight: 400;
  thead & { border-right: 1px solid ${line}; }
  thead &:not(:first-child) { border-bottom: ${(p) => (p.$selected ? "1px solid #8fce94" : "0")}; }
`;

const Corner = styled.span`
  display: block;
  width: 0;
  margin-left: 12px;
  border: 4px solid #bbbdbb;
  border-top-color: transparent;
  border-left-color: transparent;
`;

const Cell = styled.td<{ $selected?: boolean }>`
  padding: 0;
  border-right: 1px solid #ebedeb;
  border-bottom: 1px solid #ebedeb;
  ${(p) => p.$selected && "border-color: #5cb865; box-shadow: -1px -1px 0 #5cb865;"}
`;

const VerticalBar = styled.div`
  display: flex;
  flex-direction: column;
  align-items: center;
  width: 12px;
  margin: 9px 1px 0;
  flex: none;
  border-left: 1px solid ${line};
  background: #ced0ce;
`;

const Thumb = styled.span`
  flex: 1;
  width: 10px;
  margin-bottom: 8px;
  border-radius: 5px;
  background: ${surface};
`;

const Arrow = styled.button<{ $turn: number }>`
  display: grid;
  place-items: center;
  width: 10px;
  height: 14px;
  flex: none;
  &::before { content: ""; border: 2px solid transparent; border-bottom: 3px solid #777; border-top: 0; transform: rotate(${(p) => p.$turn}deg); }
`;

const SheetTabs = styled.div`
  display: flex;
  align-items: center;
  height: 16px;
  flex: none;
`;

const TabNav = styled.div`
  display: flex;
  width: 86px;
  padding-left: 6px;
`;

const SheetTab = styled.button<{ $active?: boolean }>`
  width: 49px;
  height: 16px;
  border-right: 1px solid #aeb0ae;
  background: ${(p) => (p.$active ? "#fdfefd" : "#bfc1bf")};
  color: ${(p) => (p.$active ? "#2ea03c" : "#555")};
  font-weight: ${(p) => (p.$active ? 700 : 400)};
`;

const HorizontalBar = styled.div`
  display: flex;
  align-items: center;
  gap: 5px;
  width: 42%;
  margin-left: auto;
  padding: 0 18px 0 5px;
`;

const Track = styled.div`
  display: flex;
  align-items: center;
  flex: 1;
  height: 12px;
  background: #ced0ce;
`;

const HorizontalThumb = styled.span`
  flex: 1;
  height: 10px;
  margin: 0 16px 0 3px;
  border-radius: 5px;
  background: ${surface};
`;

const SplitGrip = styled.span`
  width: 3px;
  height: 8px;
  flex: none;
  border: 1px solid #c0c2c0;
  border-width: 0 1px;
`;

const SideBar = styled.aside`
  display: flex;
  flex-direction: column;
  align-items: center;
  width: 24px;
  flex: none;
`;

const Grip = styled.span`
  width: 12px;
  height: 3px;
  margin: 8px 0;
  border: 1px solid #b5b7b5;
  border-width: 1px 0;
`;

const SideButton = styled.button`
  display: grid;
  place-items: center;
  width: 24px;
  height: 26px;
`;

const SideRule = styled.span`
  width: 22px;
  height: 1px;
  margin: 10px 0 11px;
  background: #cdcfcd;
`;

const sideIcons: IconProps[] = [
  { k: "M3.500 1.500v10l2.500-2 2 4 1.500-1-2-3.500h3.500z" },
  { k: "M5.500 4V2.500h7v6H10" + circle(5, 9, 3.5) },
  { k: "M5.500 3.500V2.500h7v7H11M4 4l4-2 3 3v3" + circle(5, 9, 3.5) + circle(7, 8, 3.5), weight: 1.3 },
  { k: "M1.500 2.500h11v10h-11zM1.500 6h11M1.500 9h11M5 2.500v10M9 2.500v10" },
  { k: "M1.500 1.500h4v4h-4zM8.500 1.500h4v4h-4zM1.500 8.500h4v4h-4z" + circle(10.5, 10.5, 2) + "M9 12l3-3" },
  { k: "M1 3.500h6M9 3.500h4M1 7.500h2M5 7.500h8M1 11.500h5M8 11.500h5" + circle(8, 3.5, 1) + circle(4, 7.5, 1) + circle(7, 11.5, 1), color: "#c4c6c4" },
  { k: "M2.500 13V1.500H13M11.500 5v6H5M10 6.500L11.500 5 13 6.500M6.500 9.500L5 11l1.500 1.500", color: "#c4c6c4" },
  { k: "M4 11.500H1.500v-10h7V4M1.500 4h7M5.500 5.500h8v7h-8zM6 11l2-2 2 2 3-3" },
  { k: "M7 2.500H1.500v10h10V8M5 10c0-4 2-6 7-6M10 1.500L12.500 4 10 6" },
  { k: "M1.500 3.500h11M2.500 5.500h9v6h-9zM5 8h4", color: "#868886" },
  { k: "M1.500 2.500h11v10h-11zM2 11l2.500-2 2 2 2-2 2 1.500 2-1.500" + circle(5, 6, 0.6), weight: 1.2 },
  { k: polygon(6, 6) + "M7 4L5 8l2 2 2.500-2z" + circle(7, 8, 1) },
  { k: "M3 4a5.500 5.500 0 1 1-1 5M1 6l1.500 2L5 6.500M7.500 4v4l3 2" },
  { k: circle(7, 7, 5.8) + "M5 5.500c0-3 4-2.500 4-.5 0 1.500-2 1.500-2 3.500M7 9.500v1.200", weight: 1.1 },
];

const letters = Array.from({ length: 26 }, (_, i) => String.fromCharCode(65 + i));
const rows = Array.from({ length: 60 }, (_, i) => i + 1);

const Worksheet = () => (
  <Workspace>
    <SheetColumn>
      <FormulaBar>
        <NameBox><input aria-label="名称框" defaultValue="K18" /><Caret /></NameBox>
        <IconButton $width={16} aria-label="定位"><Icon box={14} k={circle(6, 6, 4.8) + circle(6, 6, 2.5) + "M9.500 9.500l4 3.500M5 4v4"} /></IconButton>
        <Fx>fx</Fx>
        <FormulaInput><input aria-label="编辑栏" /></FormulaInput>
      </FormulaBar>
      <SheetArea>
        <Viewport>
          <Grid>
            <colgroup><col />{letters.map((l) => <col key={l} />)}</colgroup>
            <thead>
              <tr>
                <Head><Corner /></Head>
                {letters.map((l) => <Head key={l} $selected={l === "K"}>{l}</Head>)}
              </tr>
            </thead>
            <tbody>
              {rows.map((r) => (
                <tr key={r}>
                  <Head $selected={r === 18}>{r}</Head>
                  {letters.map((l) => <Cell key={l} $selected={r === 18 && l === "K"} />)}
                </tr>
              ))}
            </tbody>
          </Grid>
        </Viewport>
        <VerticalBar>
          <Arrow $turn={0} aria-label="向上" />
          <Thumb />
          <Arrow $turn={180} aria-label="向下" />
        </VerticalBar>
      </SheetArea>
      <SheetTabs>
        <TabNav>
          {["M4 2v8M10 2L6 6l4 4", "M8 2L4 6l4 4", "M4 2l4 4-4 4", "M2 2l4 4-4 4M8 2v8"].map((d, i) => (
            <IconButton key={i} aria-label={`工作表导航 ${i + 1}`}><Icon box={12} size={10} k={d} color="#b9bbb9" /></IconButton>
          ))}
        </TabNav>
        <SheetTab $active>Sheet1</SheetTab>
        <SheetTab>Sheet2</SheetTab>
        <SheetTab>Sheet3</SheetTab>
        <HorizontalBar>
          <SplitGrip />
          <Track>
            <Arrow $turn={270} aria-label="向左" />
            <HorizontalThumb />
            <Arrow $turn={90} aria-label="向右" />
          </Track>
          <SplitGrip />
        </HorizontalBar>
      </SheetTabs>
    </SheetColumn>
    <SideBar>
      <Grip />
      {sideIcons.map((icon, i) => <SideButton key={i} aria-label={`侧栏 ${i + 1}`}><Icon box={14} {...icon} /></SideButton>)}
      <SideRule />
      <SideButton aria-label="更多"><Icon box={14} fill="M2 6h2v2H2zM6 6h2v2H6zM10 6h2v2h-2z" color="#8d8f8d" /></SideButton>
    </SideBar>
  </Workspace>
);

/* ---------- status bar ---------- */

const StatusBar = styled.footer`
  display: flex;
  align-items: center;
  height: 20px;
  flex: none;
  padding: 0 10px 0 5px;
  border-bottom: 1px solid #777;
`;

const ViewButton = styled.button<{ $active?: boolean }>`
  display: grid;
  place-items: center;
  width: 17px;
  height: 17px;
  margin-right: 2px;
  background: ${(p) => (p.$active ? "#b7b9b7" : "none")};
`;

const Zoom = styled.label`
  display: flex;
  align-items: center;
  width: 33px;
  margin: 0 5px;
  select { appearance: none; width: 29px; font-size: 10px; }
`;

const Slider = styled.input`
  appearance: none;
  width: 100px;
  height: 12px;
  margin: 0 6px;
  background: linear-gradient(#999, #999) center / 100% 1px no-repeat;
  &::-webkit-slider-thumb { appearance: none; width: 9px; height: 9px; border: 1px solid #555; border-radius: 50%; background: ${surface}; }
`;

const Status = () => (
  <StatusBar>
    <IconButton $width={14} aria-label="宏"><Icon box={14} k="M1.500 2.500h8v3h-8zM9.500 4h3M3 5.500v2M1.500 7.500h10v3h-10zM3 12.500h8" color="#a5a7a5" /></IconButton>
    <Push />
    <ViewButton aria-label="全屏"><Icon box={14} size={12} k="M1.500 5V1.500H5M12.500 9v3.500H9" color="#999" g="M9 1.500h3.500V5M12.500 1.500L8.500 5.500M1.500 9v3.500H5M1.500 12.500l4-4" /></ViewButton>
    <ViewButton $active aria-label="普通视图"><Icon box={14} k="M1.500 2.500h11v9h-11zM1.500 5.500h11M1.500 8.500h11M5 2.500v9M9 2.500v9" color="#444" /></ViewButton>
    <ViewButton aria-label="分页预览"><Icon box={14} k="M1 2.500h5v4H1M8 2.500h4.500v4H8M1 8.500h11.500M1 11.500h5M8 11.500h4.500V9M7 2v11" /></ViewButton>
    <ViewButton aria-label="页面布局"><Icon box={14} k="M4.500 1.500h5v11h-5zM1 5.500h12v3H1zM12 5.500l1.500 1.500L12 8.500" /></ViewButton>
    <IconButton $width={24} aria-label="护眼模式"><Icon box={14} k={"M1 8c3-4 9-4 12 0-3 5-9 5-12 0zM7 1v3M3 2l1.500 2.500M11 2L9.500 4.500" + circle(7, 8.5, 2)} /></IconButton>
    <Zoom>
      <select aria-label="显示比例"><option>100%</option></select><Caret />
    </Zoom>
    <IconButton $width={10} aria-label="缩小"><Icon box={10} k="M0 5h9" weight={1.5} /></IconButton>
    <Slider type="range" aria-label="缩放" defaultValue={49} />
    <IconButton $width={10} aria-label="放大"><Icon box={10} k="M1 5h8M5 1v8" weight={1.5} /></IconButton>
  </StatusBar>
);

/* ---------- task bar ---------- */

const TaskBar = styled.div`
  display: flex;
  align-items: center;
  height: 32px;
  flex: none;
  padding: 0 16px 3px 11px;
  background: #030507;
  color: #e6e8e6;
`;

const TaskDivider = styled.span`
  width: 3px;
  height: 22px;
  margin: 0 6px 0 16px;
  border: 1px solid #25282b;
  border-width: 0 1px;
`;

const TaskApp = styled.button`
  display: grid;
  place-items: center;
  width: 35px;
  height: 28px;
  border-bottom: 2px solid #76aedb;
  background: #2f3534;
`;

const InputMethod = styled.button`
  width: 12px;
  height: 11px;
  margin: 0 5px 14px 0;
  border-radius: 2px;
  background: #e8581f;
  color: #fff;
  font-weight: 700;
  line-height: 11px;
  transform: rotate(-8deg);
`;

const Clock = styled.div`
  width: 74px;
  margin: 0 13px 0 5px;
  text-align: center;
  line-height: 13px;
  white-space: nowrap;
`;

const Tasks = () => (
  <TaskBar>
    <ToolButton aria-label="开始菜单">
      <svg width="13" height="13" viewBox="0 0 13 13" fill="#f4f6f4"><path d="M0 2l5.700-.8v5H0zM6.300 1.100L13 0v6.200H6.300zM0 6.800h5.700v5L0 11zM6.300 6.800H13V13l-6.700-1.100z" /></svg>
    </ToolButton>
    <TaskDivider />
    <TaskApp aria-label="WPS Office">
      <svg width="16" height="18" viewBox="0 0 16 18">
        <path d="M8 .5l7.500 4.200v8.600L8 17.500.5 13.300V4.700z" fill="#2a74dc" />
        <path d="M3 6h2l1.500 5L8 8l-.8-2H13l-2.500 6H10L8.500 8.500 7 12h-.8z" fill="none" stroke="#fff" />
      </svg>
    </TaskApp>
    <Push />
    <TaskDivider />
    <InputMethod>S</InputMethod>
    <IconButton aria-label="托盘"><Icon box={12} k="M2 8l4-4 4 4" color="#ddd" /></IconButton>
    <IconButton aria-label="网络"><Icon box={14} k="M4 3.500h8.500v6H4zM8 9.500v3M5.500 12.500h6M1.500 2v3h2M2.500 5v5H5" color="#ddd" /></IconButton>
    <IconButton $width={16} aria-label="音量"><Icon box={14} k="M1.500 5.500h2l3-3v9l-3-3h-2zM8.500 5c1 1 1 3 0 4M10.500 3.500c2 2 2 5 0 7M12.500 2c2 3 2 7 0 10" color="#ddd" /></IconButton>
    <Clock>10:28<br />2019/8/19 星期一</Clock>
    <ToolButton aria-label="通知">
      <svg width="13" height="13" viewBox="0 0 13 13"><path d="M.5.500h12v9h-5L5 12.500v-3H.5z" fill="#f4f6f4" /><path d="M3 3h7M3 5h7M3 7h5" stroke="#222" strokeWidth=".8" /></svg>
    </ToolButton>
  </TaskBar>
);

/* ---------- top bars ---------- */

const quickIcons: [string, string][] = [
  ["保存", "M1.500 2.500q0-1 1-1h7l3 2v8q0 1-1 1h-9q-1 0-1-1zM4 1.500v3h5v-3M4 12.500v-5h6v5"],
  ["输出", "M1 3.500h3M3 7.500h4M4 2h5c4 0 4 6 0 6H6M6 5v8M3.500 10l2.500 3"],
  ["打印", "M3.500 5V1.500h7V5M3.500 10.500h-2V5h11v5.500h-2M3.500 8h7v5h-7z"],
  ["预览", "M6 12.500H1.500v-11h10V5M12 12l1.500 1.500" + circle(8.5, 8.5, 3)],
  ["撤销", "M2 3v4h4M2 7c3-5 10-3 9 1 0 2-2 4-4 4"],
  ["恢复", "M12 3v4H8M12 7C9 2 2 4 3 8c0 2 2 4 4 4"],
  ["更多", "M4 5h6M4.500 7.500h5L7 10z"],
];

const tabs = ["开始", "插入", "页面布局", "公式", "数据", "审阅", "视图", "安全", "开发工具", "特色应用"];

export default function App() {
  return (
    <Window>
      <Global />
      <TitleBar>
        <WindowTab $width={56} $tone="#496698">
          <svg width="12" height="8" viewBox="0 0 12 8" fill="none" stroke="#fff" strokeWidth="1.300"><path d="M.5 1h2.500l1.500 5L6 3l-.5-2H11L9 7 7.500 3 6 7H3.500L1 1" /></svg>
          WPS
        </WindowTab>
        <WindowTab $width={84} $tone="#4c4d57">
          <svg width="10" height="11" viewBox="0 0 10 11"><rect width="10" height="11" rx="3" fill="#ee4a25" /><path d="M5 2c2 2 0 2 2 3 0-1 1-1 1 1 0 4-6 4-6 1 0-1 1-1 1.500 0C5 6 4 4 5 2z" fill="#fff" /></svg>
          稻壳商城
        </WindowTab>
        <FileTab $width={180} $tone={surface}>
          <svg width="10" height="11" viewBox="0 0 10 11"><rect width="10" height="11" rx="1" fill="#4cb050" /><path d="M7.500 3h-5v2.500h5V8h-5" fill="none" stroke="#fff" strokeWidth="1.200" /></svg>
          新建 XLSX 工作表.xlsx
          <Push />
          <Icon box={12} size={10} k="M1.500 2.500h9v6h-9zM6 8.500v2M4 10.500h4" color="#999" />
          <Icon box={12} size={10} k="M2 2l8 8M10 2l-8 8" color="#777" />
        </FileTab>
        <IconButton $width={28} aria-label="新建"><Icon box={10} k="M1 5h8M5 1v8" color="#d5d6da" weight={1.2} /></IconButton>
        <TitleTools>
          <Counter>1</Counter>
          <Divider $tone="#5a5d69" />
          <Label>
            <ToolButton aria-label="积分"><Icon box={14} size={10} k={"M2.500 1.500H7a5.500 5.500 0 0 1 0 11H2.500zM5 4h4M5 7h4M5 10h4M7 4v6"} color="#a5a7b0" weight={1.3} /></ToolButton>
            &nbsp;
            <ToolButton aria-label="换肤"><Icon box={14} size={10} k="M5 1.500L1 4l1.500 3 1.500-.5v6h6v-6l1.500.5L13 4 9 1.500c-1 2-3 2-4 0z" color="#a5a7b0" weight={1.3} /></ToolButton>
          </Label>
          <Divider $tone="#5a5d69" />
          <Label>
            <svg width="13" height="13" viewBox="0 0 13 13"><circle cx="6.500" cy="6.500" r="6" fill="#dfd3c4" /><path d="M3 4c1-3 7-3 7 1v4c-2 3-5 2-6 0z" fill="#d89270" /><path d="M1 8c2 0 2 3 4 4.500C2 12 .8 10 1 8z" fill="#5d8a62" /></svg>
            <span>&nbsp;城冠嘻</span>
          </Label>
          <Divider $tone="#5a5d69" />
          <ToolButton aria-label="最小化"><Icon box={12} size={10} k="M2 8h8" color="#a5a7b0" /></ToolButton>
          <ToolButton aria-label="还原"><Icon box={12} size={10} k="M1.500 4.500h6v6h-6zM4 4V1.500h6.500V8H8" color="#a5a7b0" /></ToolButton>
          <ToolButton aria-label="关闭"><Icon box={12} size={10} k="M2 2l8 8M10 2l-8 8" color="#a5a7b0" /></ToolButton>
        </TitleTools>
      </TitleBar>
      <MenuBar>
        <FileMenu>
          <Icon box={12} k="M1 2.500h10M1 6.500h10M1 10.500h10" />文件<Icon box={8} k="M1 2.500l3 3 3-3" />
        </FileMenu>
        <QuickTools>
          {quickIcons.map(([name, d], i) => (
            <IconButton key={name} aria-label={name}><Icon box={14} size={12} k={d} color={i === 4 || i === 5 ? "#b0b2b0" : ink} /></IconButton>
          ))}
        </QuickTools>
        <MenuTabs>
          {tabs.map((t) => <MenuTab key={t} $active={t === "插入"}>{t}</MenuTab>)}
        </MenuTabs>
        <Search><Icon box={14} size={12} k={circle(6, 6, 4.5) + "M9.500 9.500l4 4"} />查找命令、搜索模板</Search>
        <Push />
        <WhiteButton><Icon box={14} size={12} k="M7 2.500H1.500v10h10V8M5 9c0-4 2-5.500 7-5.500M10 1l2.500 2.500L10 6" />分享</WhiteButton>
        <WhiteButton><Icon box={14} size={12} k="M7 2.500h5.500v9H5l-2.500 2V8M1 4h5M3.500 1.500v5M6 6h4M6 8.500h4" />批注<Caret /></WhiteButton>
        <IconButton $width={24} aria-label="帮助"><Icon box={14} size={12} k={circle(7, 7, 6) + "M5 5.500c0-3 4-2.500 4-.5 0 1.500-2 1.500-2 3.500M7 9.500v1.200"} /></IconButton>
        <IconButton $width={13} aria-label="选项"><Icon box={12} fill="M5 1h1v2H5zM5 5h1v2H5zM5 9h1v2H5z" /></IconButton>
        <IconButton $width={25} aria-label="折叠功能区"><Icon box={12} k="M1 8l5-4 5 4" /></IconButton>
      </MenuBar>
      <RibbonContent />
      <Worksheet />
      <Status />
      <Tasks />
    </Window>
  );
}
